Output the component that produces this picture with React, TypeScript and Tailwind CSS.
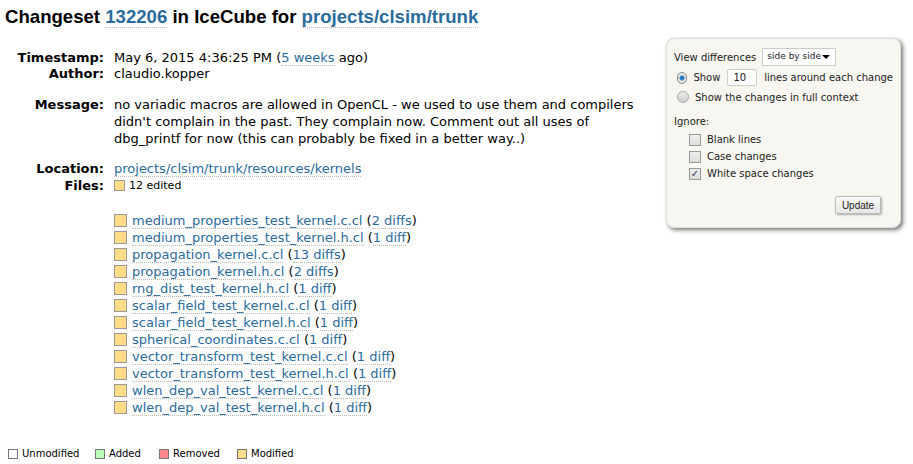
import React from "react";

const link = "text-[#2a6b9c] border-b border-dotted border-[#bbbbbb]";

const files: [string, string][] = [
  ["medium_properties_test_kernel.c.cl", "2 diffs"],
  ["medium_properties_test_kernel.h.cl", "1 diff"],
  ["propagation_kernel.c.cl", "13 diffs"],
  ["propagation_kernel.h.cl", "2 diffs"],
  ["rng_dist_test_kernel.h.cl", "1 diff"],
  ["scalar_field_test_kernel.c.cl", "1 diff"],
  ["scalar_field_test_kernel.h.cl", "1 diff"],
  ["spherical_coordinates.c.cl", "1 diff"],
  ["vector_transform_test_kernel.c.cl", "1 diff"],
  ["vector_transform_test_kernel.h.cl", "1 diff"],
  ["wlen_dep_val_test_kernel.c.cl", "1 diff"],
  ["wlen_dep_val_test_kernel.h.cl", "1 diff"],
];

function Label({ children }: { children: React.ReactNode }) {
  return <div className="w-[104px] text-right font-bold shrink-0">{children}</div>;
}

export default function App() {
  return (
    <div
      className="w-[913px] h-[464px] bg-white text-black overflow-hidden relative"
      style={{ fontFamily: '"DejaVu Sans", Verdana, sans-serif' }}
    >
      <h1
        className="absolute left-[5px] top-[5px] text-[18.6px] font-bold leading-[24px]"
        style={{ fontFamily: '"Liberation Sans", Arial, sans-serif' }}
      >
        Changeset <span className={link}>132206</span> in IceCube for{" "}
        <span className={link}>projects/clsim/trunk</span>
      </h1>

      <div className="pt-[50px] text-[13px] leading-[16px]">
        <div className="flex">
          <Label>Timestamp:</Label>
          <div className="pl-[10px]">
            May 6, 2015 4:36:25 PM (<span className={link}>5 weeks</span> ago)
          </div>
        </div>
        <div className="flex">
          <Label>Author:</Label>
          <div className="pl-[10px]">claudio.kopper</div>
        </div>
        <div className="flex mt-[14px] leading-[17px]">
          <Label>Message:</Label>
          <div className="pl-[10px]">
            no variadic macros are allowed in OpenCL - we used to use them and compilers
            <br />
            didn't complain in the past. They complain now. Comment out all uses of
            <br />
            dbg_printf for now (this can probably be fixed in a better way..)
          </div>
        </div>
        <div className="flex mt-[13px] leading-[17px]">
          <Label>Location:</Label>
          <div className="pl-[10px]">
            <span className={link}>projects/clsim/trunk/resources/kernels</span>
          </div>
        </div>
        <div className="flex leading-[17px]">
          <Label>Files:</Label>
          <div className="pl-[10px] flex items-center gap-[4px] text-[11px]">
            <span className="w-[11px] h-[11px] bg-[#fd8] border border-[#999]" />
            <span>12 edited</span>
          </div>
        </div>
        <div className="ml-[114px] mt-[18px] leading-[17px]">
          {files.map(([f, d]) => (
            <div key={f} className="flex items-center">
              <span className="w-[13px] h-[13px] bg-[#fd8] border border-[#999] mr-[5px]" />
              <span>
                <span className={link}>{f}</span>{" "}
                <span>(</span>
                <span className={link}>{d}</span>
                <span>)</span>
              </span>
            </div>
          ))}
        </div>
      </div>

      <div className="absolute left-[8px] top-[448px] flex items-center text-[10px] leading-[12px]">
        <div className="w-[87px] flex items-center">
          <span className="w-[10px] h-[10px] border border-[#777] bg-white mr-[4px]" />
          <span>Unmodified</span>
        </div>
        <div className="w-[64px] flex items-center">
          <span className="w-[10px] h-[10px] border border-[#777] bg-[#bfb] mr-[4px]" />
          <span>Added</span>
        </div>
        <div className="w-[78px] flex items-center">
          <span className="w-[10px] h-[10px] border border-[#777] bg-[#f88] mr-[4px]" />
          <span>Removed</span>
        </div>
        <div className="flex items-center">
          <span className="w-[10px] h-[10px] border border-[#777] bg-[#fd8] mr-[4px]" />
          <span>Modified</span>
        </div>
      </div>

      <div className="absolute left-[666px] top-[38px] w-[235px] h-[190px] bg-[#f7f6f0] rounded-[8px] shadow-[2px_2px_4px_rgba(0,0,0,0.55)] border border-[#ddd] text-[10px] text-[#222] px-[7px] pt-[9px] whitespace-nowrap">
        <div className="flex items-center h-[18px]">
          <span>View differences</span>
          <span className="ml-[6px] w-[74px] h-[18px] bg-white border border-[#ccc] flex items-center justify-between pl-[4px] pr-[5px] text-[9px]">
            <span>side by side</span>
            <span className="w-0 h-0 border-l-[4px] border-r-[4px] border-t-[4px] border-l-transparent border-r-transparent border-t-black" />
          </span>
        </div>
        <div className="flex items-center h-[17px] mt-[3px]">
          <span className="ml-[3px] w-[12px] h-[12px] rounded-full border border-[#888] bg-[radial-gradient(circle,#1a5f9e_0,#3a8fd0_35%,#ddd_45%,#f4f4f4_100%)] mr-[6px]" />
          <span>Show</span>
          <span className="ml-[7px] w-[33px] h-[17px] bg-white border border-[#ccc] rounded-[2px] flex items-center px-[5px]">10</span>
          <span className="ml-[7px]">lines around each change</span>
        </div>
        <div className="flex items-center h-[16px] mt-[3px]">
          <span className="ml-[3px] w-[12px] h-[12px] rounded-full border border-[#aaa] bg-[linear-gradient(#eee,#ccc)] mr-[6px]" />
          <span>Show the changes in full context</span>
        </div>
        <div className="h-[14px] mt-[9px] flex items-center">Ignore:</div>
        <div className="ml-[15px] mt-[3px] flex flex-col">
          {["Blank lines", "Case changes", "White space changes"].map((t, i) => (
            <div key={t} className="flex items-center h-[17px]">
              <span className="w-[12px] h-[12px] border border-[#999] bg-[linear-gradient(#eee,#ddd)] mr-[6px] flex items-center justify-center text-[10px] text-[#335] leading-none">
                {i === 2 ? "✓" : ""}
              </span>
              <span>{t}</span>
            </div>
          ))}
        </div>
        <div className="flex justify-end mt-[14px] mr-[12px]">
          <span
            className="w-[46px] h-[18px] flex items-center justify-center bg-[linear-gradient(#fafafa,#e6e6e6)] border border-[#bbb] rounded-[2px] shadow-[1px_1px_2px_rgba(0,0,0,0.3)] text-[10px]"
            style={{ fontFamily: '"Liberation Sans", Arial, sans-serif' }}
          >
            Update
          </span>
        </div>
      </div>
    </div>
  );
}
